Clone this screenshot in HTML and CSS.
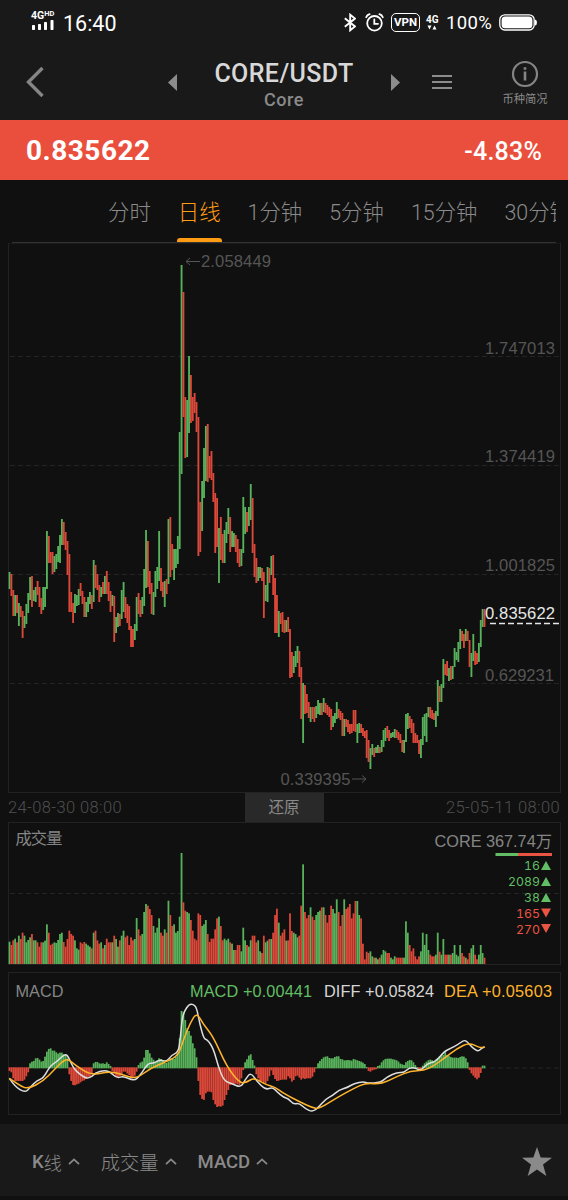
FILE: index.html
```html
<!DOCTYPE html>
<html lang="zh-CN">
<head>
  <meta charset="UTF-8">
  <meta name="viewport" content="width=device-width, initial-scale=1.0">
  <title>CORE/USDT</title>
  <link rel="stylesheet" href="styles.css">
</head>
<body>

  <header class="header">
    <div class="status">
      <div class="signal">
        <span class="net">4G<small>HD</small></span>
        <svg width="24" height="11" viewBox="0 0 24 11" fill="#fff">
          <rect x="1" y="5" width="3" height="5" rx="0.7"/>
          <rect x="7" y="4" width="3" height="6" rx="0.7"/>
          <rect x="13" y="2" width="3" height="8" rx="0.7"/>
          <rect x="19.5" y="0" width="3" height="10" rx="0.7"/>
        </svg>
      </div>
      <span class="clock">16:40</span>
      <div class="status-right">
        <svg class="bt" width="12" height="19" viewBox="0 0 12 19" fill="none" stroke="#fff" stroke-width="1.9">
          <path d="M0.8 5.2 L11 13.4 L6.2 17.3 V1.7 L11 5.6 L0.8 13.8"/>
        </svg>
        <svg class="alarm" width="19" height="19" viewBox="0 0 19 19" fill="none" stroke="#fff" stroke-width="1.8" stroke-linecap="round">
          <circle cx="9.5" cy="10.3" r="7.3"/>
          <path d="M9.3 6.5 V10.8 H13"/>
          <path d="M1.2 4.2 Q2 2 4.6 1.2 M17.8 4.2 Q17 2 14.4 1.2"/>
        </svg>
        <span class="vpn">VPN</span>
        <div class="mobile">
          <span>4G</span>
          <svg width="10" height="5" viewBox="0 0 10 5" fill="#fff"><path d="M0.5 0.5 H4.5 L2.5 4.5 Z M7.5 0.5 L9.5 4.5 H5.5 Z"/></svg>
        </div>
        <span class="percent">100%</span>
        <svg width="38" height="17" viewBox="0 0 38 17">
          <rect x="0.8" y="0.8" width="34.4" height="15.2" rx="5" fill="none" stroke="#fff" stroke-width="1.3"/>
          <rect x="2.6" y="2.6" width="30.8" height="11.6" rx="3.5" fill="#fff"/>
          <path d="M36 5.5 Q38 6 38 8.5 Q38 11 36 11.5 Z" fill="#fff"/>
        </svg>
      </div>
    </div>

    <div class="nav">
      <svg class="back" width="20" height="32" viewBox="0 0 20 32" fill="none" stroke="#858585" stroke-width="3.4"><path d="M17.5 2 L3.5 16 L17.5 30"/></svg>
      <svg class="prev" width="9" height="17" viewBox="0 0 9 17" fill="#8c8c8c"><path d="M9 0 V17 L0 8.5 Z"/></svg>
      <div class="pair">
        <h1>CORE/USDT</h1>
        <p>Core</p>
      </div>
      <svg class="next" width="9" height="17" viewBox="0 0 9 17" fill="#8c8c8c"><path d="M0 0 V17 L9 8.5 Z"/></svg>
      <svg class="menu" width="20" height="14" viewBox="0 0 20 14" fill="#8c8c8c"><path d="M0 0 H20 V2 H0 Z M0 6 H20 V8 H0 Z M0 12 H20 V14 H0 Z"/></svg>
      <div class="info">
        <svg width="28" height="28" viewBox="0 0 28 28" fill="none" stroke="#858585" stroke-width="2.2">
          <circle cx="14" cy="14" r="12"/>
          <path d="M14 11.5 V20.5 M14 7.3 V9.7" stroke-width="2.6"/>
        </svg>
        <span>币种简况</span>
      </div>
    </div>
  </header>

  <section class="price-bar">
    <span class="price">0.835622</span>
    <span class="change">-4.83%</span>
  </section>

  <nav class="tabs">
    <a>分时</a>
    <a class="active">日线</a>
    <a>1分钟</a>
    <a>5分钟</a>
    <a>15分钟</a>
    <a>30分钟</a>
  </nav>

  <main class="charts">
    <svg class="panel" width="568" height="550" viewBox="0 243 568 550">
      <rect class="frame" x="8.5" y="243" width="552" height="549.5"/>
      <path class="grid" d="M10 356.5 H559 M10 465.5 H559 M10 574.5 H559 M10 683.5 H559"/>
      <g id="candles"></g>
      <g class="axis">
        <text x="485" y="353.5" textLength="70">1.747013</text>
        <text x="485" y="462" textLength="70">1.374419</text>
        <text x="485" y="571" textLength="70">1.001825</text>
        <text x="485" y="680.5" textLength="69">0.629231</text>
        <text x="201" y="266.5" textLength="70">2.058449</text>
        <text x="280.5" y="784.5" textLength="70">0.339395</text>
        <path d="M200 261.5 H186 M190 258 L186 261.5 L190 265 M352 779 H366 M362 775.5 L366 779 L362 782.5"/>
      </g>
      <path class="now-line" d="M490 623.5 H559"/>
      <text class="now" x="485" y="619" textLength="70">0.835622</text>
    </svg>

    <div class="range">
      <span>24-08-30 08:00</span>
      <button>还原</button>
      <span class="end">25-05-11 08:00</span>
    </div>

    <svg class="panel volume" width="568" height="143" viewBox="0 822 568 143">
      <rect class="frame" x="8.5" y="822.5" width="552" height="142"/>
      <path class="grid" d="M10 893.5 H559"/>
      <g id="volume"></g>
      <text class="label" x="15.5" y="844" textLength="47">成交量</text>
      <text class="label total" x="434.5" y="846.5" textLength="117.5">CORE 367.74万</text>
      <rect class="up" x="495.5" y="853" width="23" height="3"/>
      <rect class="down" x="518" y="853" width="34" height="3"/>
      <g class="counts">
        <g class="up">
          <text x="540" y="870">16</text>
          <text x="540" y="886">2089</text>
          <text x="540" y="902">38</text>
          <path d="M541 870 L546 861 L551 870 Z M541 886 L546 877 L551 886 Z M541 902 L546 893 L551 902 Z"/>
        </g>
        <g class="down">
          <text x="540" y="917.5">165</text>
          <text x="540" y="933.5">270</text>
          <path d="M541 908.5 H551 L546 917.5 Z M541 924 H551 L546 933 Z"/>
        </g>
      </g>
    </svg>

    <svg class="panel macd" width="568" height="143" viewBox="0 972 568 143">
      <rect class="frame" x="8.5" y="972.5" width="552" height="142"/>
      <path class="grid" d="M10 1068 H559"/>
      <g id="hist"></g>
      <path id="diff" class="line diff"/>
      <path id="dea" class="line dea"/>
      <text class="label" x="15.5" y="996.5" textLength="48">MACD</text>
      <text class="label green" x="190" y="996.5" textLength="122">MACD +0.00441</text>
      <text class="label white" x="324" y="996.5" textLength="110">DIFF +0.05824</text>
      <text class="label amber" x="444" y="996.5" textLength="108">DEA +0.05603</text>
    </svg>
  </main>

  <footer class="footer">
    <span>K<i>线</i> <svg width="12" height="7" viewBox="0 0 12 7"><path d="M1 6.2 L6 1.4 L11 6.2"/></svg></span>
    <span><i>成交量</i> <svg width="12" height="7" viewBox="0 0 12 7"><path d="M1 6.2 L6 1.4 L11 6.2"/></svg></span>
    <span>MACD <svg width="12" height="7" viewBox="0 0 12 7"><path d="M1 6.2 L6 1.4 L11 6.2"/></svg></span>
    <svg class="star" width="30" height="30" viewBox="0 0 30 30"><path d="M15 0 L18.7 10.6 L30 10.8 L21 17.6 L24.3 29 L15 22.4 L5.7 29 L9 17.6 L0 10.8 L11.3 10.6 Z"/></svg>
  </footer>

  <script src="chart.js"></script>
</body>
</html>
```
FILE: styles.css
```css
* {
  box-sizing: border-box;
}

body {
  margin: 0;
  width: 568px;
  height: 1200px;
  overflow: hidden;
  background-color: #101010;
  color: #8a8a8a;
  font-family: Roboto, "Noto Sans CJK SC", sans-serif;
}

svg {
  display: block;
  flex: none;
}

.header {
  height: 120px;
  background-color: #191919;
}

.status {
  display: flex;
  align-items: center;
  height: 44px;
  padding: 0 31px 0 31px;
  color: #fff;
}

.signal {
  width: 26px;
  margin: -2px 6px 0 0;
}

.net {
  display: flex;
  align-items: flex-start;
  font-size: 10.5px;
  font-weight: 700;
  line-height: 9px;
}

.net small {
  font-size: 7.5px;
  line-height: 6px;
}

.clock {
  padding-top: 3px;
  font-size: 21.5px;
}

.status-right {
  display: flex;
  align-items: center;
  margin-left: auto;
}

.alarm {
  margin: 0 7px 0 9px;
}

.vpn {
  width: 29px;
  height: 19px;
  border: 1.5px solid #fff;
  border-radius: 5px;
  font-size: 11.5px;
  font-weight: 700;
  line-height: 17px;
  text-align: center;
}

.mobile {
  width: 13px;
  margin: 0 7px 0 6px;
  font-size: 10px;
  font-weight: 700;
  line-height: 10px;
}

.mobile svg {
  margin-left: 1px;
}

.percent {
  margin-right: 7px;
  padding-top: 2px;
  font-size: 18.5px;
  letter-spacing: 0.3px;
}

.nav {
  display: flex;
  align-items: center;
  height: 76px;
  padding-left: 25px;
}

.prev {
  margin-left: 123px;
}

.pair {
  width: 214px;
  padding-top: 6px;
  text-align: center;
}

.pair h1 {
  margin: 0;
  color: #d8d8d8;
  font-size: 25px;
  font-weight: 500;
  line-height: 28px;
  letter-spacing: 0.4px;
}

.pair p {
  margin: 0;
  font-size: 18px;
  font-weight: 500;
  line-height: 23px;
  letter-spacing: 0.6px;
}

.next {
  margin-right: 32px;
}

.info {
  display: flex;
  flex-direction: column;
  align-items: center;
  width: 50px;
  margin: 8px 0 0 48px;
  font-size: 11.3px;
  line-height: 24px;
  white-space: nowrap;
}

.price-bar {
  display: flex;
  align-items: center;
  justify-content: space-between;
  height: 60px;
  padding: 0 26px;
  background-color: #ea4f3d;
  color: #fff;
}

.price {
  font-size: 28px;
  font-weight: 700;
  letter-spacing: 0.5px;
}

.change {
  padding-top: 2px;
  font-size: 25px;
  font-weight: 500;
  letter-spacing: 0.2px;
}

.tabs {
  display: flex;
  gap: 27px;
  height: 63px;
  margin: 0 12px;
  padding-left: 96px;
  overflow: hidden;
  border-bottom: 1px solid #333;
  font-size: 21.4px;
  font-weight: 300;
  line-height: 65px;
  white-space: nowrap;
}

.tabs a {
  position: relative;
  flex: none;
  height: 62px;
}

.tabs .active {
  color: #ff9c14;
}

.tabs .active::after {
  content: "";
  position: absolute;
  left: -1px;
  right: -1px;
  bottom: 0;
  height: 4px;
  border-radius: 3px 3px 0 0;
  background-color: #ff9c14;
}

.frame {
  fill: none;
  stroke: #222;
}

.grid {
  stroke: #242424;
  stroke-dasharray: 5 3;
}

.axis {
  fill: #555;
  font-family: "Liberation Sans", sans-serif;
  font-size: 16.6px;
}

.axis path {
  fill: none;
  stroke: #555;
}

.now {
  fill: #e6e6e6;
  font-family: "Liberation Sans", sans-serif;
  font-size: 16.6px;
}

.now-line {
  stroke: #e6e6e6;
  stroke-width: 1.5;
  stroke-dasharray: 6 3;
}

.up {
  fill: #62be65;
}

.down {
  fill: #ea5443;
}

.bar-up {
  fill: #58b25b;
}

.bar-down {
  fill: #dc4839;
}

.range {
  display: grid;
  grid-template-columns: 1fr 79px 1fr;
  height: 29px;
  padding: 0 8px;
  color: #4f4f4f;
  font-size: 16.5px;
  font-weight: 300;
  letter-spacing: 0.4px;
  line-height: 30px;
}

.range button {
  height: 30px;
  padding: 0 0 4px;
  border: 0;
  background-color: #292929;
  color: #8a8a8a;
  font: 15.5px "Noto Sans CJK SC", sans-serif;
}

.end {
  text-align: right;
}

.label {
  fill: #858585;
  font-family: "Liberation Sans", "Noto Sans CJK SC", sans-serif;
  font-size: 16.3px;
}

.green {
  fill: #62be65;
}

.white {
  fill: #d5d5d5;
}

.amber {
  fill: #ffb42c;
}

.counts {
  font-family: Inter, sans-serif;
  font-size: 12.3px;
  font-variant-numeric: tabular-nums;
  text-anchor: end;
}

.macd {
  margin-top: 7px;
}

.line {
  fill: none;
  stroke-width: 1.5;
  stroke-linejoin: round;
}

.diff {
  stroke: #dedede;
}

.dea {
  stroke: #ffb42c;
}

.footer {
  display: flex;
  align-items: center;
  height: 72px;
  margin-top: 9px;
  padding: 3px 16px 0 32px;
  background-color: #191919;
  font-size: 18.5px;
  font-weight: 500;
}

.footer span {
  display: flex;
  align-items: center;
  gap: 6px;
  margin-right: 21px;
}

.footer i {
  font-size: 19.3px;
  font-style: normal;
  font-weight: 300;
}

.footer span:first-child {
  gap: 0;
}

.footer span:first-child i {
  margin-right: 6px;
  font-size: 18px;
}

.footer span path {
  fill: none;
  stroke: #8a8a8a;
  stroke-width: 1.8;
}

.star {
  margin-left: auto;
  fill: #8a8a8a;
}
```
FILE: chart.js
```js
// g = up, r = down, followed by the top and bottom of the bar
const candles = `g572-589 r574-596 r590-616 g595-616 r595-613 g603-626 r606-617 r611-638 g616-628 g604-624
g593-613 g577-600 r576-607 g590-601 g587-602 r581-595 r587-607 r598-614 g587-610 g587-607
g531-589 r536-563 r552-563 r552-574 g556-572 g554-569 g546-562 g535-563 g519-545 r522-545
r532-550 r541-575 r554-612 r592-612 r603-623 g594-613 g595-606 g589-605 r583-596 r591-604
r597-617 g602-617 g597-612 g592-604 r595-609 g560-602 r565-588 r574-590 r585-602 g587-597
r582-594 g576-594 r571-594 r582-601 r591-612 g595-606 r596-642 g617-633 g613-627 r614-626
g590-619 g582-612 r597-618 r604-623 r606-630 r626-647 r629-647 g624-640 g597-631 r593-614
r600-617 g597-614 g569-606 g530-588 r541-587 r571-594 r583-614 g592-615 g571-597 g567-589
g531-581 r568-591 r582-597 g581-607 r579-594 g519-584 r517-577 r544-570 g549-580 g549-568
g536-564 g432-549 g265-474 r292-417 r397-458 g400-457 g356-433 r375-423 r397-421 r393-413
r402-432 r417-556 r502-552 g481-531 g448-498 g426-481 r424-482 r456-478 r451-480 r473-502
r493-553 r498-547 g528-583 r517-560 r534-563 g530-563 g522-543 g508-534 r517-552 g531-547
g533-547 r535-552 r539-563 r549-567 g549-566 g497-553 g507-534 r512-532 g507-526 g484-520
r498-553 r544-577 r558-583 g567-581 g567-578 r568-581 r572-618 g585-601 g567-602 r568-583
g556-575 r555-595 r578-633 r595-633 g611-637 r613-624 r612-632 r620-633 g620-632 r617-632
r629-678 r652-677 g656-673 g651-667 g646-663 r651-677 r667-719 g683-743 r685-714 r694-713
r702-718 g707-722 r707-719 r707-722 g706-718 g700-714 g703-715 r703-715 g698-712 r703-713
r705-715 r707-717 r709-730 g716-727 g713-723 g702-719 r709-718 r711-720 r713-736 g719-736
r719-727 r720-732 r724-734 r724-733 r710-731 r710-732 g724-743 g723-733 r724-733 r728-736
r731-738 r730-758 r740-762 g748-769 g744-755 r748-757 g747-753 g745-753 r747-753 g740-752
g730-747 g728-741 r726-738 r730-741 g733-738 g732-737 g729-738 r730-738 r732-740 r734-743
r740-752 g740-753 g714-742 g713-729 r716-728 r719-733 r723-743 r733-743 r735-743 r740-754
g739-758 g717-745 g714-736 g713-742 g707-717 r707-718 r710-719 r713-720 g711-727 g680-716
r686-702 g684-702 g659-688 r664-675 r661-676 g668-681 r666-680 g666-679 g648-667 g652-660
g642-662 g629-649 r631-641 r634-648 g629-641 r631-641 r640-667 g653-677 g634-661 r651-665
r653-664 g643-662 g620-647 g609-627 r609-627`.split(/\s+/);

const volumeTops = [
  455,465,451,446,457,437,447,428,437,457,450,442,432,451,451,457,470,457,457,452,
  403,428,465,461,457,459,450,432,428,456,470,447,422,432,437,451,475,479,457,461,
  456,461,466,470,475,428,422,451,461,457,475,465,446,457,457,457,437,447,470,451,
  437,422,442,437,465,442,451,447,384,418,437,432,366,342,347,357,375,408,428,413,
  385,428,437,418,428,332,375,408,403,428,423,380,189,337,362,366,370,390,422,446,
  451,370,375,408,403,390,432,456,446,446,418,385,380,408,451,446,451,446,457,461,
  480,480,465,465,484,413,451,465,470,451,437,437,457,451,484,489,437,457,452,447,
  447,428,375,356,398,437,428,418,452,451,370,423,428,432,442,437,347,223,366,385,
  375,352,380,390,375,366,362,352,352,375,398,375,347,357,370,328,366,408,375,328,
  357,352,342,385,370,333,333,375,385,461,508,485,489,484,499,503,503,508,503,494,
  480,484,489,489,503,508,499,503,503,503,503,503,394,428,465,484,475,499,508,499,
  484,428,465,432,480,494,499,499,494,428,485,494,447,494,494,494,494,489,465,494,
  499,465,489,499,503,508,489,475,465,494,508,494,465,489,503
];

const hist = [
  -8,-12,-30,-38,-38,-38,-38,-38,-34,-24,-12,15,20,22,30,31,26,20,22,35,
  50,58,60,53,53,48,44,47,47,42,42,30,-18,-38,-50,-51,-48,-46,-42,-38,
  -36,-32,-28,-25,-15,15,19,19,15,14,15,13,18,13,7,-8,-16,-24,-26,-24,
  -18,-10,-10,-16,-20,-26,-28,-22,-10,10,17,20,32,55,55,45,32,26,20,24,
  30,28,24,16,16,20,30,30,28,35,45,90,172,168,145,120,112,98,75,60,
  33,-38,-80,-92,-95,-75,-70,-70,-72,-95,-108,-116,-114,-115,-112,-95,-80,-65,-50,-48,
  -50,-46,-48,-50,-30,-5,18,27,38,42,25,8,-18,-30,-40,-38,-42,-45,-38,-24,
  -6,-20,-32,-38,-37,-35,-34,-34,-34,-24,-30,-40,-35,-24,-22,-28,-34,-30,-32,-30,
  -30,-30,-25,-12,3,15,22,28,33,35,36,31,30,30,34,36,36,28,27,24,
  24,25,24,23,28,26,24,22,20,17,13,4,-8,-10,-6,-4,-3,7,9,18,
  24,28,29,29,29,27,26,24,20,14,12,10,18,22,25,24,18,10,4,-6,
  -4,8,15,20,24,26,24,22,26,31,36,36,40,48,40,38,34,32,32,32,
  31,34,36,35,30,18,-5,-15,-22,-28,-33,-28,-14,8,8
];

const diff = [
  [28,340],[45,365],[75,383],[90,368],[112,345],[130,340],[150,303],[170,290],[195,266],[205,275],
  [220,310],[240,328],[260,341],[275,335],[290,321],[325,315],[350,340],[370,333],[402,348],[420,332],
  [445,293],[460,296],[480,284],[500,290],[515,270],[535,262],[541,220],[546,165],[552,140],[567,118],[580,118],[590,128],
  [600,180],[612,222],[622,224],[640,250],[655,305],[672,348],[695,355],[722,368],[735,345],[752,322],
  [770,348],[797,375],[817,366],[830,380],[852,398],[864,400],[880,418],[897,414],[917,432],[937,440],
  [952,430],[977,402],[997,392],[1017,375],[1042,368],[1062,355],[1092,350],[1102,355],[1142,353],[1162,335],
  [1192,322],[1212,323],[1227,308],[1247,308],[1262,318],[1282,295],[1307,290],[1332,260],[1352,250],[1372,240],
  [1392,225],[1402,230],[1417,248],[1435,260],[1445,249],[1454,246]
];

const dea = [
  [28,340],[60,362],[85,372],[130,348],[165,312],[190,287],[205,283],[225,300],[275,332],[330,318],
  [375,332],[410,341],[450,310],[500,290],[535,272],[550,225],[570,175],[590,142],[610,178],[640,215],
  [680,305],[720,355],[740,352],[762,338],[800,360],[825,366],[852,386],[902,412],[937,428],[957,432],
  [1012,397],[1062,370],[1097,354],[1142,358],[1192,334],[1232,318],[1272,317],[1302,302],[1332,280],[1372,250],
  [1407,233],[1442,249],[1454,246]
];

const STEP = 1.87;
const LEFT = 8.6;

function addBar(group, i, top, bottom, up, width) {
  const bar = document.createElementNS("http://www.w3.org/2000/svg", "rect");
  bar.setAttribute("x", (LEFT + i * STEP).toFixed(2));
  bar.setAttribute("y", top);
  bar.setAttribute("width", width);
  bar.setAttribute("height", bottom - top);
  bar.setAttribute("class", up ? "bar-up" : "bar-down");
  group.appendChild(bar);
}

// Smooth line through the midpoints of the segments
function smooth(points) {
  const p = points.map(([x, y]) => [x / 3, 965 + y / 3]);
  let d = "M" + p[0];
  for (let i = 1; i < p.length - 1; i++) {
    d += " Q" + p[i] + " " + (p[i][0] + p[i + 1][0]) / 2 + "," + (p[i][1] + p[i + 1][1]) / 2;
  }
  return d + " L" + p[p.length - 1];
}

const candleGroup = document.getElementById("candles");
const volumeGroup = document.getElementById("volume");
const histGroup = document.getElementById("hist");

candles.forEach((candle, i) => {
  const up = candle[0] === "g";
  const [top, bottom] = candle.slice(1).split("-").map(Number);
  addBar(candleGroup, i, top, bottom, up, 1.85);
  addBar(volumeGroup, i, 790 + volumeTops[i] / 3, 964, up, 1.8);

  const value = hist[i] / 3;
  if (value >= 0) {
    addBar(histGroup, i, 1068.3 - value, 1068.3, true, 1.8);
  } else {
    addBar(histGroup, i, 1067.3, 1068.3 - value, false, 1.8);
  }
});

document.getElementById("diff").setAttribute("d", smooth(diff));
document.getElementById("dea").setAttribute("d", smooth(dea));
```
